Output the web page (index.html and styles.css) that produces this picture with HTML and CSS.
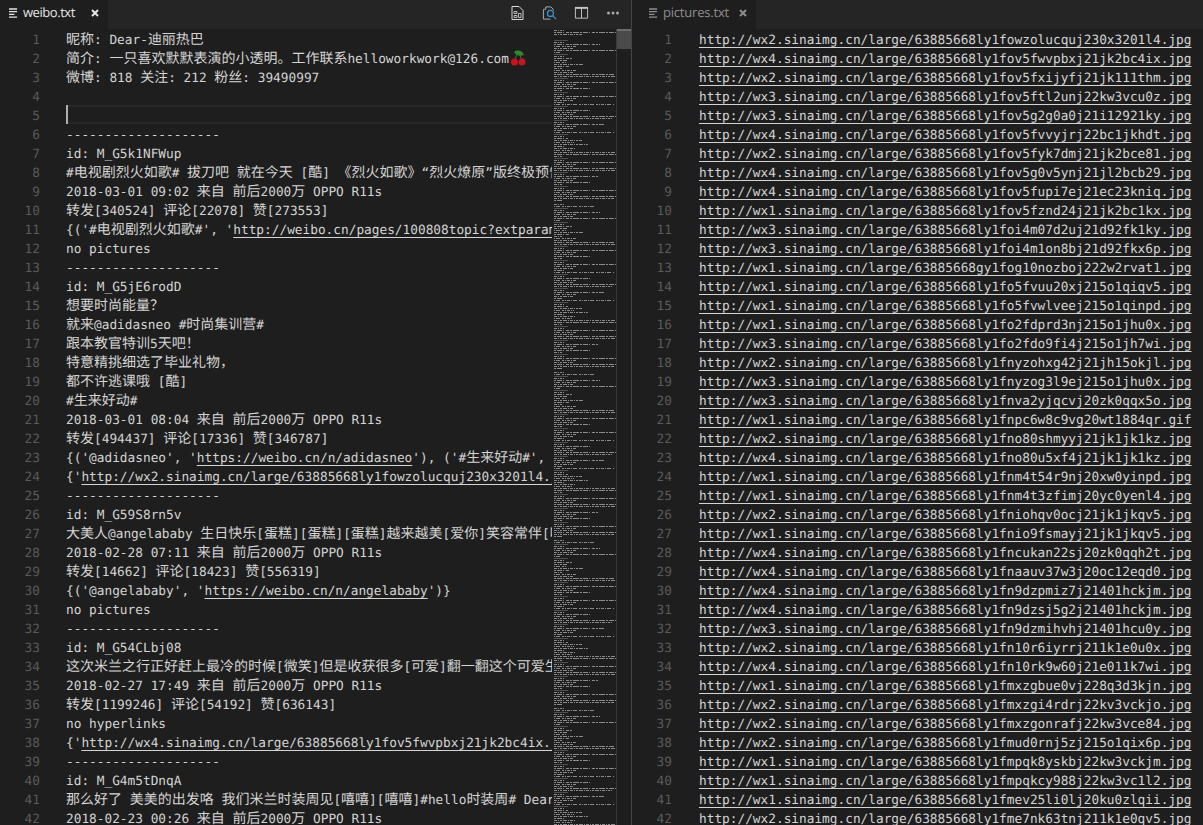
FILE: index.html
```html
<!DOCTYPE html>
<html lang="zh-CN">
<head>
<meta charset="utf-8">
<title>weibo.txt</title>
<link rel="stylesheet" href="styles.css">
</head>
<body>
<main class="workbench">
  <section class="group group-left">
    <header class="tabbar">
      <div class="tab tab-active">
        <svg class="file-icon" viewBox="0 0 10 11"><path d="M0 1h9M0 4h9M0 7h6M0 10h9"/></svg>
        <span class="tab-name">weibo.txt</span>
        <svg class="close" viewBox="0 0 8 8"><path d="M1 1l6 6M7 1l-6 6"/></svg>
      </div>
      <div class="actions">
        <svg class="action" viewBox="0 0 14 16">
          <path class="a-line" d="M1.5 1.5h7l4 4v9h-11z"/>
          <path class="a-thin" d="M3.5 6.5h3v2h-3zM3.5 10.5h3v2h-3zM8 8.5h2.500v4H8z"/>
        </svg>
        <svg class="action" viewBox="0 0 16 16">
          <path class="a-dim" d="M4 4V1.500h5.500L12 4v1M4 4H1.500v10.500H9"/>
          <circle class="a-blue" cx="9" cy="8.500" r="3.200"/>
          <path class="a-blue" d="M11.500 11l3.500 3.500"/>
        </svg>
        <svg class="action" viewBox="0 0 16 16">
          <path class="a-split" d="M1.500 2.500h13v11h-13zM8 2.500v11"/>
          <path class="a-band" d="M1 2.500h14"/>
        </svg>
        <svg class="action action-more" viewBox="0 0 12 16">
          <circle class="a-dot" cx="2" cy="8" r="1.500"/><circle class="a-dot" cx="6.500" cy="8" r="1.500"/><circle class="a-dot" cx="11" cy="8" r="1.500"/>
        </svg>
      </div>
    </header>
    <div class="editor">
      <div class="lines lines-left">
        <div class="row"><span class="n">1</span><span class="t"><span class="c">昵称</span>: Dear-<span class="c">迪丽热巴</span></span></div>
        <div class="row"><span class="n">2</span><span class="t"><span class="c">简介</span>: <span class="c">一只喜欢默默表演的小透明。工作联系</span>helloworkwork@126.com<svg class="cherry" viewBox="0 0 16 16"><path class="stem" d="M4.500 10C6 7 7 5 8 2M11.500 10C11 7 10 5 8 2"/><path class="leaf" d="M4 2c3-2.500 8-2 10 3-3 1.500-8 1-10-3z"/><circle class="fruit" cx="4.500" cy="12" r="3.500"/><circle class="fruit" cx="12" cy="12" r="3.500"/></svg></span></div>
        <div class="row"><span class="n">3</span><span class="t"><span class="c">微博</span>: 818 <span class="c">关注</span>: 212 <span class="c">粉丝</span>: 39490997</span></div>
        <div class="row"><span class="n">4</span><span class="t"></span></div>
        <div class="row row-current"><span class="n">5</span><span class="t"></span><span class="cursor"></span></div>
        <div class="row"><span class="n">6</span><span class="t">--------------------</span></div>
        <div class="row"><span class="n">7</span><span class="t">id: M_G5k1NFWup</span></div>
        <div class="row"><span class="n">8</span><span class="t">#<span class="c">电视剧烈火如歌</span># <span class="c">拔刀吧</span> <span class="c">就在今天</span> [<span class="c">酷</span>] <span class="c">《烈火如歌》</span>“<span class="c">烈火燎原</span>”<span class="c">版终极预告片</span></span></div>
        <div class="row"><span class="n">9</span><span class="t">2018-03-01 09:02 <span class="c">来自</span> <span class="c">前后</span>2000<span class="c">万</span> OPPO R11s</span></div>
        <div class="row"><span class="n">10</span><span class="t"><span class="c">转发</span>[340524] <span class="c">评论</span>[22078] <span class="c">赞</span>[273553]</span></div>
        <div class="row"><span class="n">11</span><span class="t">{('#<span class="c">电视剧烈火如歌</span>#', '<a class="lk">http://weibo.cn/pages/100808topic?extparam=%E7%83%88</a></span></div>
        <div class="row"><span class="n">12</span><span class="t">no pictures</span></div>
        <div class="row"><span class="n">13</span><span class="t">--------------------</span></div>
        <div class="row"><span class="n">14</span><span class="t">id: M_G5jE6rodD</span></div>
        <div class="row"><span class="n">15</span><span class="t"><span class="c">想要时尚能量？</span></span></div>
        <div class="row"><span class="n">16</span><span class="t"><span class="c">就来</span>@adidasneo #<span class="c">时尚集训营</span>#</span></div>
        <div class="row"><span class="n">17</span><span class="t"><span class="c">跟本教官特训</span>5<span class="c">天吧！</span></span></div>
        <div class="row"><span class="n">18</span><span class="t"><span class="c">特意精挑细选了毕业礼物，</span></span></div>
        <div class="row"><span class="n">19</span><span class="t"><span class="c">都不许逃课哦</span> [<span class="c">酷</span>]</span></div>
        <div class="row"><span class="n">20</span><span class="t">#<span class="c">生来好动</span>#</span></div>
        <div class="row"><span class="n">21</span><span class="t">2018-03-01 08:04 <span class="c">来自</span> <span class="c">前后</span>2000<span class="c">万</span> OPPO R11s</span></div>
        <div class="row"><span class="n">22</span><span class="t"><span class="c">转发</span>[494437] <span class="c">评论</span>[17336] <span class="c">赞</span>[346787]</span></div>
        <div class="row"><span class="n">23</span><span class="t">{('@adidasneo', '<a class="lk">https://weibo.cn/n/adidasneo</a>'), ('#<span class="c">生来好动</span>#', </span></div>
        <div class="row"><span class="n">24</span><span class="t">{'<a class="lk">http://wx2.sinaimg.cn/large/63885668ly1fowzolucquj230x3201l4.jpg</a>'</span></div>
        <div class="row"><span class="n">25</span><span class="t">--------------------</span></div>
        <div class="row"><span class="n">26</span><span class="t">id: M_G59S8rn5v</span></div>
        <div class="row"><span class="n">27</span><span class="t"><span class="c">大美人</span>@angelababy <span class="c">生日快乐</span>[<span class="c">蛋糕</span>][<span class="c">蛋糕</span>][<span class="c">蛋糕</span>]<span class="c">越来越美</span>[<span class="c">爱你</span>]<span class="c">笑容常伴</span>[<span class="c">吃</span>]</span></div>
        <div class="row"><span class="n">28</span><span class="t">2018-02-28 07:11 <span class="c">来自</span> <span class="c">前后</span>2000<span class="c">万</span> OPPO R11s</span></div>
        <div class="row"><span class="n">29</span><span class="t"><span class="c">转发</span>[14662] <span class="c">评论</span>[18423] <span class="c">赞</span>[556319]</span></div>
        <div class="row"><span class="n">30</span><span class="t">{('@angelababy', '<a class="lk">https://weibo.cn/n/angelababy</a>')}</span></div>
        <div class="row"><span class="n">31</span><span class="t">no pictures</span></div>
        <div class="row"><span class="n">32</span><span class="t">--------------------</span></div>
        <div class="row"><span class="n">33</span><span class="t">id: M_G54CLbj08</span></div>
        <div class="row"><span class="n">34</span><span class="t"><span class="c">这次米兰之行正好赶上最冷的时候</span>[<span class="c">微笑</span>]<span class="c">但是收获很多</span>[<span class="c">可爱</span>]<span class="c">翻一翻这个可爱生活</span></span></div>
        <div class="row"><span class="n">35</span><span class="t">2018-02-27 17:49 <span class="c">来自</span> <span class="c">前后</span>2000<span class="c">万</span> OPPO R11s</span></div>
        <div class="row"><span class="n">36</span><span class="t"><span class="c">转发</span>[1199246] <span class="c">评论</span>[54192] <span class="c">赞</span>[636143]</span></div>
        <div class="row"><span class="n">37</span><span class="t">no hyperlinks</span></div>
        <div class="row"><span class="n">38</span><span class="t">{'<a class="lk">http://wx4.sinaimg.cn/large/63885668ly1fov5fwvpbxj21jk2bc4ix.jpg</a>'</span></div>
        <div class="row"><span class="n">39</span><span class="t">--------------------</span></div>
        <div class="row"><span class="n">40</span><span class="t">id: M_G4m5tDnqA</span></div>
        <div class="row"><span class="n">41</span><span class="t"><span class="c">那么好了</span> <span class="c">美美的出发咯</span> <span class="c">我们米兰时装周见</span>[<span class="c">嘻嘻</span>][<span class="c">嘻嘻</span>]#hello<span class="c">时装周</span># Dear</span></div>
        <div class="row"><span class="n">42</span><span class="t">2018-02-23 00:26 <span class="c">来自</span> <span class="c">前后</span>2000<span class="c">万</span> OPPO R11s</span></div>
      </div>
      <svg class="minimap" viewBox="0 0 63 796" aria-hidden="true">
        <defs>
          <pattern id="mm-page" width="63" height="168" patternUnits="userSpaceOnUse" patternTransform="translate(0 11)">
            <path class="mm-faint" d="M1 .5h14M1 14.500h14M1 38.500h14M1 52.500h14M1 66.500h14M1 80.500h14M1 94.500h14M1 118.500h14M1 132.500h14M1 146.500h14"/>
            <path class="mm-a" d="M1 2.500h10M1 8.500h19M1 16.500h10M1 20.500h14M1 24.500h30M1 28.500h8M1 32.500h19M1 36.500h63M1 40.500h10M1 46.500h19M1 50.500h8M1 54.500h10M1 60.500h19M1 68.500h10M1 74.500h19M1 78.500h58M1 82.500h10M1 88.500h19M1 96.500h10M1 100.500h28M1 104.500h34M1 108.500h22M1 112.500h63M1 116.500h8M1 120.500h10M1 126.500h19M1 130.500h61M1 134.500h10M1 140.500h19M1 144.500h8M1 148.500h10M1 154.500h19M1 158.500h60M1 164.500h10"/>
            <path class="mm-b" d="M1 4.500h46M1 10.500h62M1 18.500h18M1 26.500h16M1 34.500h61M1 42.500h63M1 48.500h38M1 56.500h63M1 62.500h10M1 70.500h38M1 76.500h63M1 84.500h50M1 90.500h8M1 98.500h14M1 106.500h12M1 114.500h62M1 122.500h62M1 128.500h63M1 136.500h44M1 142.500h36M1 150.500h63M1 156.500h63M1 160.500h8"/>
            <path class="mm-c" d="M1 6.500h22M1 12.500h8M1 22.500h12M1 30.500h22M1 44.500h22M1 58.500h22M1 64.500h60M1 72.500h22M1 86.500h22M1 92.500h60M1 102.500h20M1 110.500h19M1 124.500h22M1 138.500h22M1 152.500h22M1 166.500h40"/>
          </pattern>
        </defs>
        <path class="mm-a" d="M1 1.500h10M1 5.500h28"/>
        <path class="mm-b" d="M1 3.500h63"/>
        <rect class="mm-fill" y="11" width="63" height="785"/>
      </svg>
      <div class="scrollbar"><div class="slider"></div></div>
    </div>
  </section>
  <section class="group group-right">
    <header class="tabbar">
      <div class="tab tab-second">
        <svg class="file-icon" viewBox="0 0 10 11"><path d="M0 1h9M0 4h9M0 7h6M0 10h9"/></svg>
        <span class="tab-name">pictures.txt</span>
        <svg class="close" viewBox="0 0 8 8"><path d="M1 1l6 6M7 1l-6 6"/></svg>
      </div>
    </header>
    <div class="editor">
      <div class="lines lines-right">
        <div class="row"><span class="n">1</span><span class="t"><a class="lk">http://wx2.sinaimg.cn/large/63885668ly1fowzolucquj230x3201l4.jpg</a></span></div>
        <div class="row"><span class="n">2</span><span class="t"><a class="lk">http://wx4.sinaimg.cn/large/63885668ly1fov5fwvpbxj21jk2bc4ix.jpg</a></span></div>
        <div class="row"><span class="n">3</span><span class="t"><a class="lk">http://wx2.sinaimg.cn/large/63885668ly1fov5fxijyfj21jk111thm.jpg</a></span></div>
        <div class="row"><span class="n">4</span><span class="t"><a class="lk">http://wx3.sinaimg.cn/large/63885668ly1fov5ftl2unj22kw3vcu0z.jpg</a></span></div>
        <div class="row"><span class="n">5</span><span class="t"><a class="lk">http://wx3.sinaimg.cn/large/63885668ly1fov5g2g0a0j21i12921ky.jpg</a></span></div>
        <div class="row"><span class="n">6</span><span class="t"><a class="lk">http://wx4.sinaimg.cn/large/63885668ly1fov5fvvyjrj22bc1jkhdt.jpg</a></span></div>
        <div class="row"><span class="n">7</span><span class="t"><a class="lk">http://wx2.sinaimg.cn/large/63885668ly1fov5fyk7dmj21jk2bce81.jpg</a></span></div>
        <div class="row"><span class="n">8</span><span class="t"><a class="lk">http://wx4.sinaimg.cn/large/63885668ly1fov5g0v5ynj21jl2bcb29.jpg</a></span></div>
        <div class="row"><span class="n">9</span><span class="t"><a class="lk">http://wx4.sinaimg.cn/large/63885668ly1fov5fupi7ej21ec23kniq.jpg</a></span></div>
        <div class="row"><span class="n">10</span><span class="t"><a class="lk">http://wx1.sinaimg.cn/large/63885668ly1fov5fznd24j21jk2bc1kx.jpg</a></span></div>
        <div class="row"><span class="n">11</span><span class="t"><a class="lk">http://wx3.sinaimg.cn/large/63885668ly1foi4m07d2uj21d92fk1ky.jpg</a></span></div>
        <div class="row"><span class="n">12</span><span class="t"><a class="lk">http://wx3.sinaimg.cn/large/63885668ly1foi4m1on8bj21d92fkx6p.jpg</a></span></div>
        <div class="row"><span class="n">13</span><span class="t"><a class="lk">http://wx1.sinaimg.cn/large/63885668gy1fog10nozboj222w2rvat1.jpg</a></span></div>
        <div class="row"><span class="n">14</span><span class="t"><a class="lk">http://wx1.sinaimg.cn/large/63885668ly1fo5fvuu20xj215o1qiqv5.jpg</a></span></div>
        <div class="row"><span class="n">15</span><span class="t"><a class="lk">http://wx1.sinaimg.cn/large/63885668ly1fo5fvwlveej215o1qinpd.jpg</a></span></div>
        <div class="row"><span class="n">16</span><span class="t"><a class="lk">http://wx1.sinaimg.cn/large/63885668ly1fo2fdprd3nj215o1jhu0x.jpg</a></span></div>
        <div class="row"><span class="n">17</span><span class="t"><a class="lk">http://wx3.sinaimg.cn/large/63885668ly1fo2fdo9fi4j215o1jh7wi.jpg</a></span></div>
        <div class="row"><span class="n">18</span><span class="t"><a class="lk">http://wx2.sinaimg.cn/large/63885668ly1fnyzohxg42j21jh15okjl.jpg</a></span></div>
        <div class="row"><span class="n">19</span><span class="t"><a class="lk">http://wx3.sinaimg.cn/large/63885668ly1fnyzog3l9ej215o1jhu0x.jpg</a></span></div>
        <div class="row"><span class="n">20</span><span class="t"><a class="lk">http://wx3.sinaimg.cn/large/63885668ly1fnva2yjqcvj20zk0qqx5o.jpg</a></span></div>
        <div class="row"><span class="n">21</span><span class="t"><a class="lk">http://wx1.sinaimg.cn/large/63885668ly1fnpc6w8c9vg20wt1884qr.gif</a></span></div>
        <div class="row"><span class="n">22</span><span class="t"><a class="lk">http://wx2.sinaimg.cn/large/63885668ly1fno80shmyyj21jk1jk1kz.jpg</a></span></div>
        <div class="row"><span class="n">23</span><span class="t"><a class="lk">http://wx4.sinaimg.cn/large/63885668ly1fno80u5xf4j21jk1jk1kz.jpg</a></span></div>
        <div class="row"><span class="n">24</span><span class="t"><a class="lk">http://wx1.sinaimg.cn/large/63885668ly1fnm4t54r9nj20xw0yinpd.jpg</a></span></div>
        <div class="row"><span class="n">25</span><span class="t"><a class="lk">http://wx1.sinaimg.cn/large/63885668ly1fnm4t3zfimj20yc0yenl4.jpg</a></span></div>
        <div class="row"><span class="n">26</span><span class="t"><a class="lk">http://wx2.sinaimg.cn/large/63885668ly1fniohqv0ocj21jk1jkqv5.jpg</a></span></div>
        <div class="row"><span class="n">27</span><span class="t"><a class="lk">http://wx1.sinaimg.cn/large/63885668ly1fnio9fsmayj21jk1jkqv5.jpg</a></span></div>
        <div class="row"><span class="n">28</span><span class="t"><a class="lk">http://wx4.sinaimg.cn/large/63885668ly1fncukan22sj20zk0qqh2t.jpg</a></span></div>
        <div class="row"><span class="n">29</span><span class="t"><a class="lk">http://wx4.sinaimg.cn/large/63885668ly1fnaauv37w3j20oc12eqd0.jpg</a></span></div>
        <div class="row"><span class="n">30</span><span class="t"><a class="lk">http://wx4.sinaimg.cn/large/63885668ly1fn9dzpmiz7j21401hckjm.jpg</a></span></div>
        <div class="row"><span class="n">31</span><span class="t"><a class="lk">http://wx4.sinaimg.cn/large/63885668ly1fn9dzsj5g2j21401hckjm.jpg</a></span></div>
        <div class="row"><span class="n">32</span><span class="t"><a class="lk">http://wx3.sinaimg.cn/large/63885668ly1fn9dzmihvhj21401hcu0y.jpg</a></span></div>
        <div class="row"><span class="n">33</span><span class="t"><a class="lk">http://wx2.sinaimg.cn/large/63885668ly1fn10r6iyrrj211k1e0u0x.jpg</a></span></div>
        <div class="row"><span class="n">34</span><span class="t"><a class="lk">http://wx4.sinaimg.cn/large/63885668ly1fn10rk9w60j21e011k7wi.jpg</a></span></div>
        <div class="row"><span class="n">35</span><span class="t"><a class="lk">http://wx1.sinaimg.cn/large/63885668ly1fmxzgbue0vj228q3d3kjn.jpg</a></span></div>
        <div class="row"><span class="n">36</span><span class="t"><a class="lk">http://wx2.sinaimg.cn/large/63885668ly1fmxzgi4rdrj22kv3vckjo.jpg</a></span></div>
        <div class="row"><span class="n">37</span><span class="t"><a class="lk">http://wx2.sinaimg.cn/large/63885668ly1fmxzgonrafj22kw3vce84.jpg</a></span></div>
        <div class="row"><span class="n">38</span><span class="t"><a class="lk">http://wx2.sinaimg.cn/large/63885668ly1fmud0rnj5zj215o1qix6p.jpg</a></span></div>
        <div class="row"><span class="n">39</span><span class="t"><a class="lk">http://wx1.sinaimg.cn/large/63885668ly1fmpqk8yskbj22kw3vckjm.jpg</a></span></div>
        <div class="row"><span class="n">40</span><span class="t"><a class="lk">http://wx1.sinaimg.cn/large/63885668ly1fmpqkcy988j22kw3vc1l2.jpg</a></span></div>
        <div class="row"><span class="n">41</span><span class="t"><a class="lk">http://wx1.sinaimg.cn/large/63885668ly1fmev25li0lj20ku0zlqii.jpg</a></span></div>
        <div class="row"><span class="n">42</span><span class="t"><a class="lk">http://wx2.sinaimg.cn/large/63885668ly1fme7nk63tnj211k1e0qv5.jpg</a></span></div>
      </div>
    </div>
  </section>
</main>
</body>
</html>
```

FILE: styles.css
```css
* { box-sizing: border-box; }

html, body {
  margin: 0;
  height: 100%;
  overflow: hidden;
  background: #1e1e1e;
}

.workbench {
  display: flex;
  width: 1203px;
  height: 825px;
  overflow: hidden;
  color: #d4d4d4;
  font-family: "DejaVu Sans Mono", "Noto Sans CJK SC", monospace;
  font-size: 12.79px;
  line-height: 19px;
  text-rendering: geometricPrecision;
}

.group {
  display: flex;
  flex-direction: column;
  height: 825px;
  min-width: 0;
}

.group-left {
  flex: 0 0 632px;
  border-right: 1px solid #444;
}

.group-right { flex: 1 1 0; }

/* tabs */
.tabbar {
  display: flex;
  flex: 0 0 29px;
  background: #252526;
}

.tab {
  display: flex;
  align-items: center;
  height: 29px;
  padding-bottom: 4px;
  background: #1e1e1e;
  font-family: "Open Sans", "Noto Sans", sans-serif;
  font-size: 13px;
  line-height: 25px;
}

.tab-active {
  width: 108px;
  padding-left: 9px;
  color: #e4e4e4;
}

.tab-second {
  width: 124px;
  padding-left: 17px;
  color: #8d8d8d;
}

.file-icon {
  flex: none;
  width: 9px;
  height: 10px;
  margin-right: 5px;
  fill: none;
  stroke: currentColor;
  stroke-width: 1.500;
}

.tab-name { letter-spacing: -0.2px; }
.tab-active .tab-name { letter-spacing: -0.45px; }

.close {
  flex: none;
  width: 8px;
  height: 8px;
  margin-left: auto;
  margin-right: 9px;
  fill: none;
  stroke: currentColor;
  stroke-width: 2;
}

.actions {
  display: flex;
  align-items: center;
  gap: 17px;
  margin-left: auto;
  padding-right: 12px;
  height: 25px;
}

.action {
  width: 15px;
  height: 16px;
  fill: none;
}

.action-more { width: 13px; }

.a-line { stroke: #d8d8d8; stroke-width: 1; }
.a-thin { stroke: #b8b8b8; stroke-width: 1; }
.a-dim { stroke: #b0b0b0; stroke-width: 1; }
.a-blue { stroke: #3794d8; stroke-width: 1.300; }
.a-split { stroke: #c5c5c5; stroke-width: 1; }
.a-band { stroke: #c5c5c5; stroke-width: 2; }
.a-dot { fill: #a8a8a8; }

/* editor */
.editor {
  display: flex;
  flex: 1 1 0;
  min-height: 0;
  overflow: hidden;
}

.lines {
  flex: 0 0 auto;
  overflow: hidden;
}

.lines-left { width: 552px; }
.lines-right { width: 571px; }

.row {
  position: relative;
  display: flex;
  height: 19px;
  white-space: pre;
}

.n {
  flex: none;
  width: 40px;
  padding-top: 2px;
  color: #5a5a5a;
  text-align: right;
}

.t {
  padding-top: 2px;
  overflow-x: clip;
  overflow-y: visible;
}

.lines-left .t { margin-left: 26px; width: 486px; }
.lines-right .t { margin-left: 27px; width: 504px; }

.c {
  font-family: "Noto Sans CJK SC", sans-serif;
  font-size: 14px;
  line-height: 0;
}

.lk {
  text-decoration: underline;
  text-decoration-thickness: 1px;
  text-underline-offset: 3px;
  text-decoration-skip-ink: none;
}

.row-current .t {
  padding-top: 0;
  border-top: 2px solid #282828;
  border-bottom: 2px solid #282828;
}

.cursor {
  position: absolute;
  left: 66px;
  top: 0;
  width: 2px;
  height: 19px;
  background: #aeafad;
}

.cherry {
  width: 16px;
  height: 16px;
  vertical-align: -3px;
  margin-left: 1px;
}

.stem { fill: none; stroke: #3f7f2a; stroke-width: 1; }
.leaf { fill: #2c8a2c; }
.fruit { fill: #c8141e; }

/* minimap */
.minimap {
  flex: none;
  width: 63px;
  height: 796px;
  margin-left: 1px;
  background: #1e1e1e;
}

.mm-fill { fill: url(#mm-page); }

.mm-a, .mm-b, .mm-c {
  fill: none;
  stroke: #8a8a8a;
  stroke-width: 1;
}

.mm-a { stroke-dasharray: 3 1 1 1 2 1 4 1 1 1; }
.mm-b { stroke-dasharray: 2 1 5 1 1 2 3 1 2 1 6 1; }
.mm-c { stroke-dasharray: 1 1 4 2 2 1 1 1 3 1; }

.mm-faint {
  fill: none;
  stroke: #4e4e4e;
  stroke-width: 1;
}

.scrollbar {
  flex: none;
  width: 15px;
  height: 796px;
  border-left: 1px solid #3a3a3a;
  background: #1e1e1e;
}

.slider {
  height: 20px;
  background: #4a4a4a;
  border-top: 2px solid #6c6c6c;
}
```
